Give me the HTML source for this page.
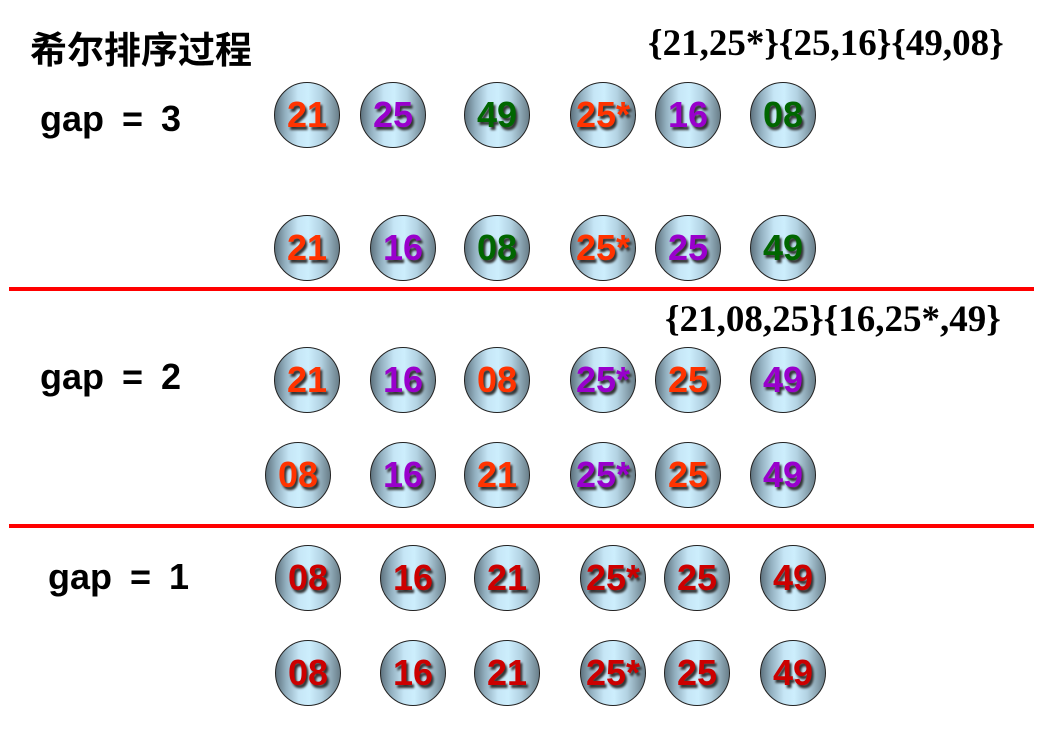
<!DOCTYPE html>
<html><head><meta charset="utf-8"><style>
body{margin:0;width:1055px;height:736px;background:#fff;position:relative;overflow:hidden;font-family:"Liberation Sans",sans-serif}
.b{position:absolute;width:64px;height:64px;margin:-33px 0 0 -33px;border:1.5px solid #222;border-radius:50%;
background:linear-gradient(90deg,#5f7480 0%,#93b0c0 16%,#c6e6f6 36%,#cdeefd 52%,#b3d2e2 72%,#6a7f8a 100%);
font-weight:bold;font-size:36px;line-height:64px;text-align:center;text-shadow:2px 3px 2px #333;white-space:nowrap}
.o{color:#ff3300}.p{color:#9900cc}.g{color:#006600}.r{color:#cc0000}
.t{position:absolute;font-weight:bold;white-space:nowrap}
.s{position:absolute;font-family:"Liberation Serif",serif;font-weight:bold;font-size:37px;white-space:nowrap}
.l{position:absolute;left:9px;width:1025px;height:4px;background:#ff0000}
.gp{font-size:36px;word-spacing:8px}
</style></head><body>
<div class="t" style="left:30px;top:20px;font-size:37px;font-family:'Liberation Sans','Noto Sans CJK SC',sans-serif">希尔排序过程</div>
<div class="s" style="left:648px;top:22px">{21,25*}{25,16}{49,08}</div>
<div class="s" style="left:665px;top:298px">{21,08,25}{16,25*,49}</div>
<div class="t gp" style="left:40px;top:98px">gap = 3</div>
<div class="t gp" style="left:40px;top:356px">gap = 2</div>
<div class="t gp" style="left:48px;top:556px">gap = 1</div>
<div class="l" style="top:287px"></div>
<div class="l" style="top:524px"></div>

<div class="b o" style="left:307px;top:115px">21</div>
<div class="b p" style="left:393px;top:115px">25</div>
<div class="b g" style="left:497px;top:115px">49</div>
<div class="b o" style="left:603px;top:115px">25*</div>
<div class="b p" style="left:688px;top:115px">16</div>
<div class="b g" style="left:783px;top:115px">08</div>

<div class="b o" style="left:307px;top:248px">21</div>
<div class="b p" style="left:403px;top:248px">16</div>
<div class="b g" style="left:497px;top:248px">08</div>
<div class="b o" style="left:603px;top:248px">25*</div>
<div class="b p" style="left:688px;top:248px">25</div>
<div class="b g" style="left:783px;top:248px">49</div>

<div class="b o" style="left:307px;top:380px">21</div>
<div class="b p" style="left:403px;top:380px">16</div>
<div class="b o" style="left:497px;top:380px">08</div>
<div class="b p" style="left:603px;top:380px">25*</div>
<div class="b o" style="left:688px;top:380px">25</div>
<div class="b p" style="left:783px;top:380px">49</div>

<div class="b o" style="left:298px;top:475px">08</div>
<div class="b p" style="left:403px;top:475px">16</div>
<div class="b o" style="left:497px;top:475px">21</div>
<div class="b p" style="left:603px;top:475px">25*</div>
<div class="b o" style="left:688px;top:475px">25</div>
<div class="b p" style="left:783px;top:475px">49</div>

<div class="b r" style="left:308px;top:578px">08</div>
<div class="b r" style="left:413px;top:578px">16</div>
<div class="b r" style="left:507px;top:578px">21</div>
<div class="b r" style="left:613px;top:578px">25*</div>
<div class="b r" style="left:697px;top:578px">25</div>
<div class="b r" style="left:793px;top:578px">49</div>

<div class="b r" style="left:308px;top:673px">08</div>
<div class="b r" style="left:413px;top:673px">16</div>
<div class="b r" style="left:507px;top:673px">21</div>
<div class="b r" style="left:613px;top:673px">25*</div>
<div class="b r" style="left:697px;top:673px">25</div>
<div class="b r" style="left:793px;top:673px">49</div>
</body></html>
